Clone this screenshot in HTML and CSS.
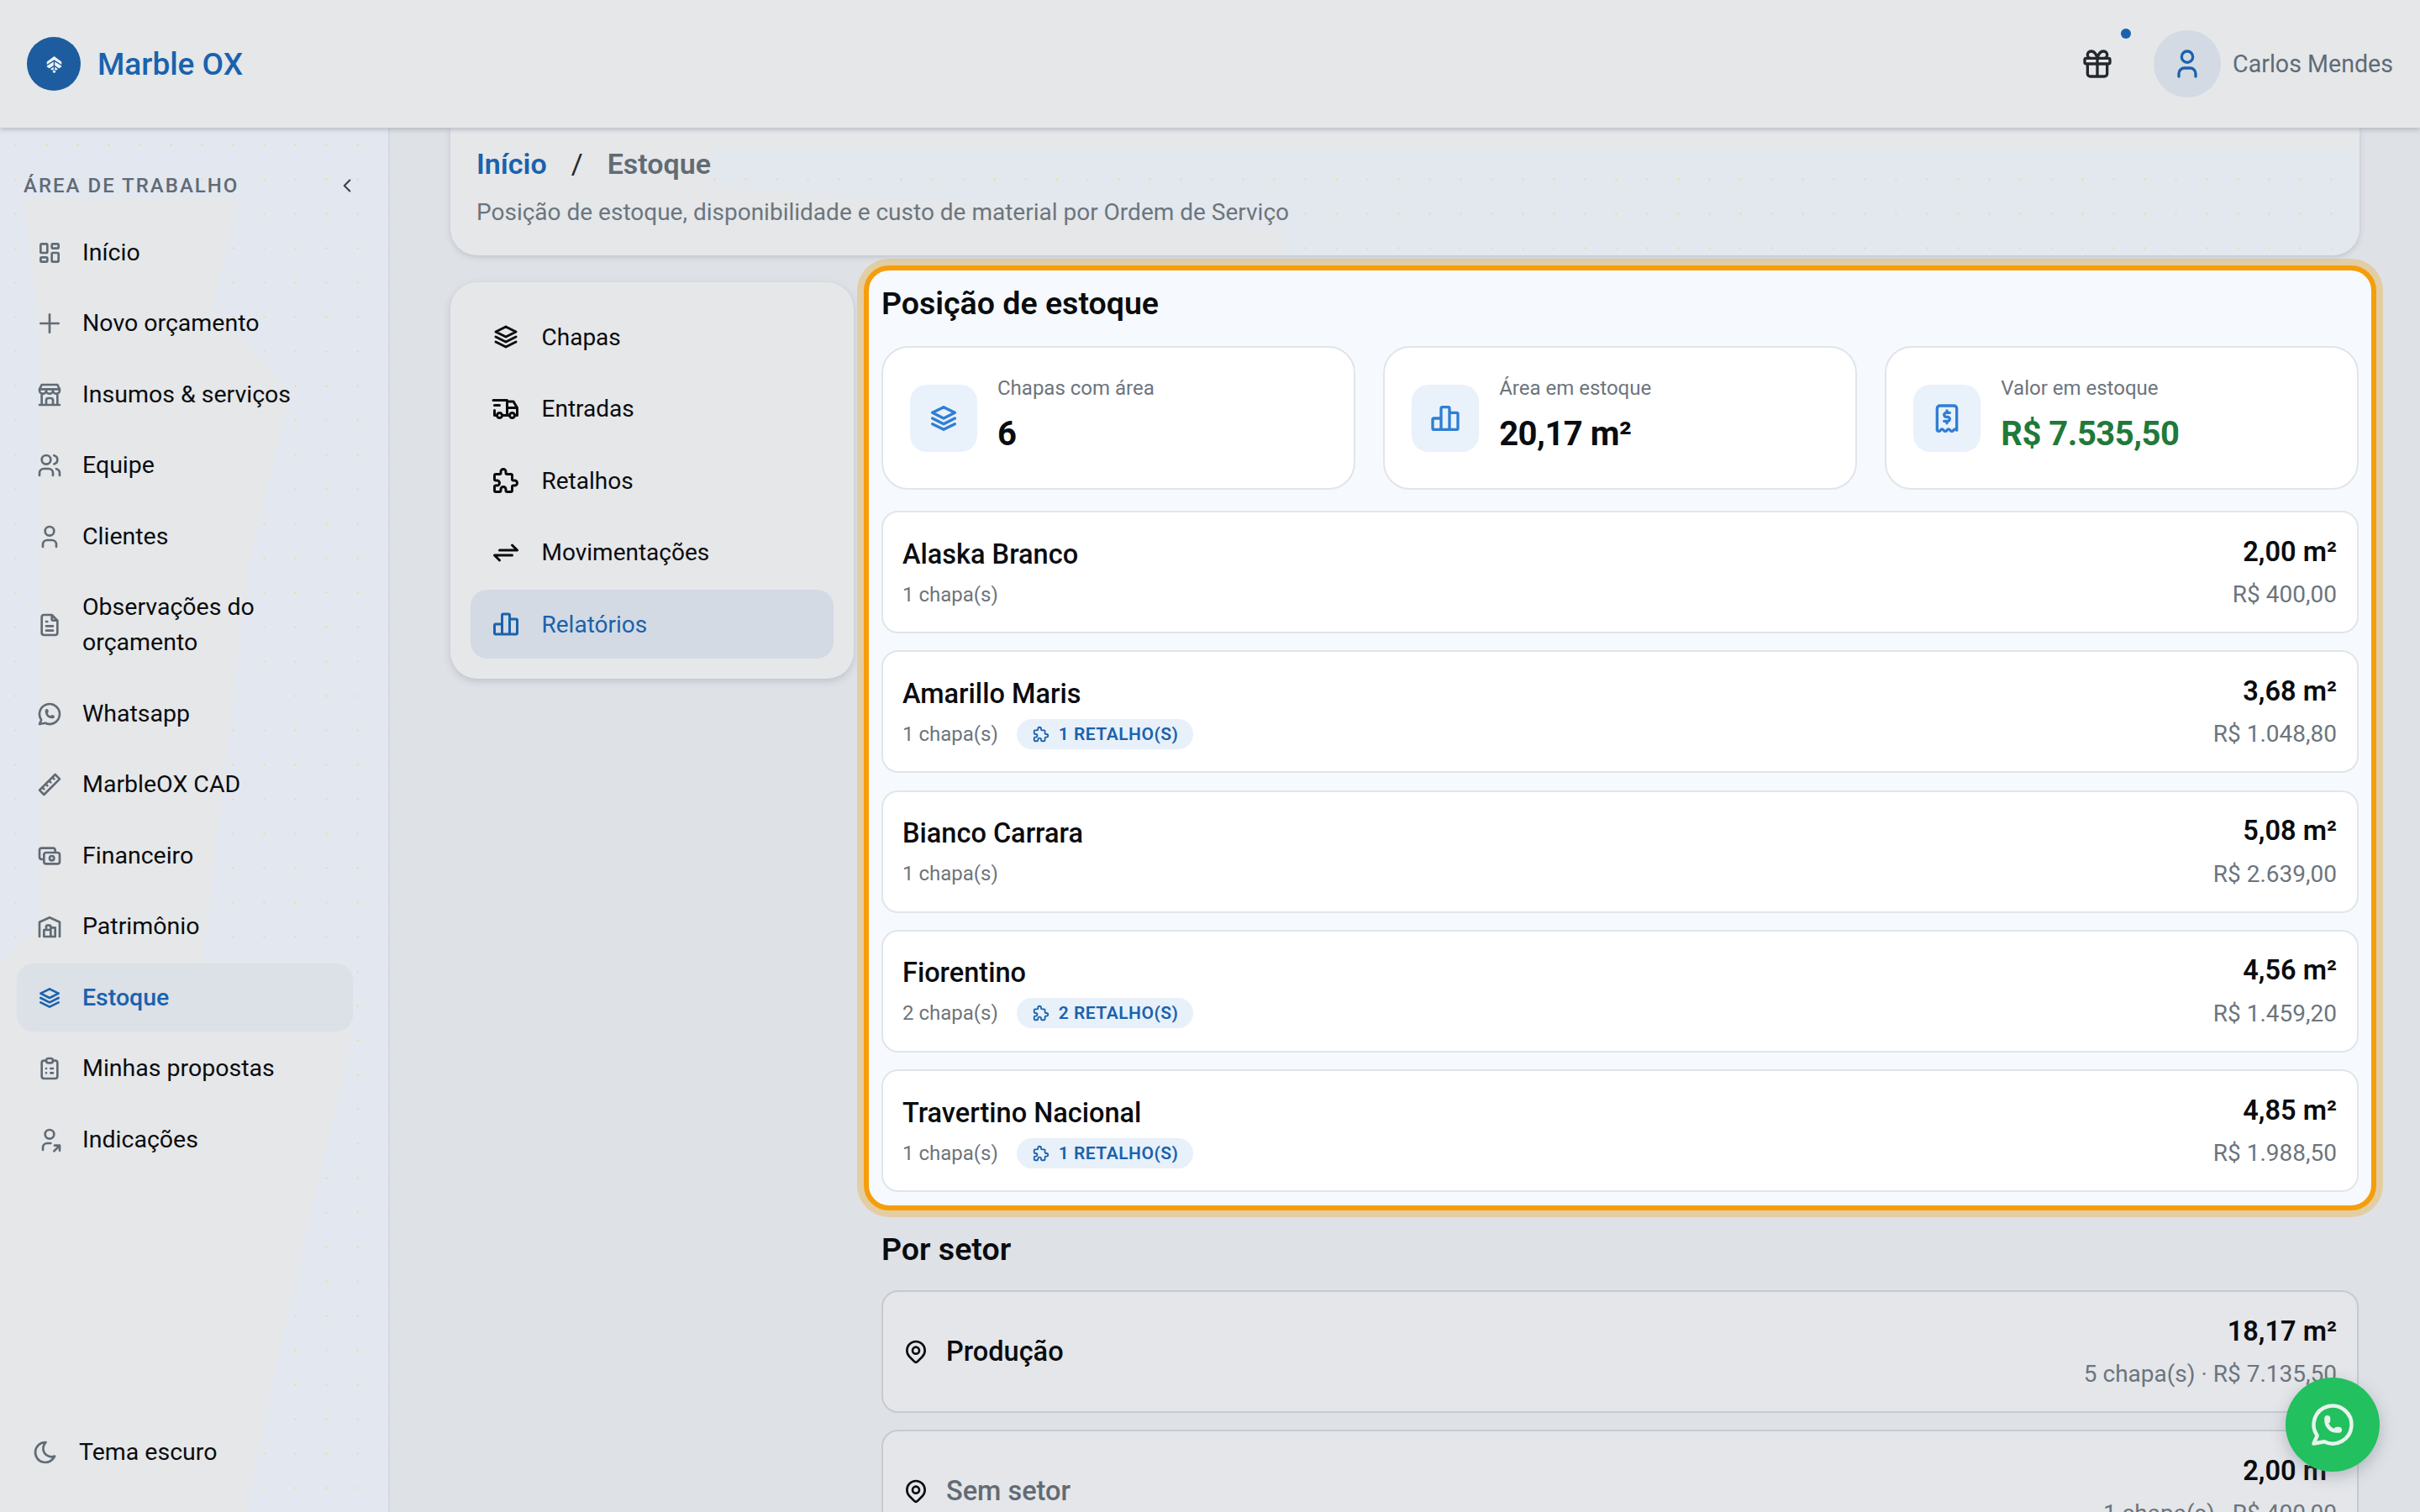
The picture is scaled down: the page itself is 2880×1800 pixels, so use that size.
FILE: index.html
```html
<!DOCTYPE html>
<html lang="pt-BR">
<head>
    <meta charset="UTF-8">
    <meta name="viewport" content="width=device-width, initial-scale=1.0">
    <title>Marble OX - Estoque</title>
    <link rel="stylesheet" href="styles.css">
</head>
<body>

    <!-- Icon sprite -->
    <svg class="sprite" xmlns="http://www.w3.org/2000/svg">
        <symbol id="i-dashboard" viewBox="0 0 24 24"><path d="M5 4h4a1 1 0 0 1 1 1v6a1 1 0 0 1 -1 1h-4a1 1 0 0 1 -1 -1v-6a1 1 0 0 1 1 -1M5 16h4a1 1 0 0 1 1 1v2a1 1 0 0 1 -1 1h-4a1 1 0 0 1 -1 -1v-2a1 1 0 0 1 1 -1M15 12h4a1 1 0 0 1 1 1v6a1 1 0 0 1 -1 1h-4a1 1 0 0 1 -1 -1v-6a1 1 0 0 1 1 -1M15 4h4a1 1 0 0 1 1 1v2a1 1 0 0 1 -1 1h-4a1 1 0 0 1 -1 -1v-2a1 1 0 0 1 1 -1"/></symbol>
        <symbol id="i-plus" viewBox="0 0 24 24"><path d="M12 4v16M4 12h16"/></symbol>
        <symbol id="i-store" viewBox="0 0 24 24"><path d="M3 21h18M3 7v1a3 3 0 0 0 6 0v-1m0 1a3 3 0 0 0 6 0v-1m0 1a3 3 0 0 0 6 0v-1h-18l2 -4h14l2 4M5 21v-10.15M19 21v-10.15M9 21v-4a2 2 0 0 1 2 -2h2a2 2 0 0 1 2 2v4"/></symbol>
        <symbol id="i-users" viewBox="0 0 24 24"><path d="M5 7a4 4 0 1 0 8 0a4 4 0 1 0 -8 0M3 21v-2a4 4 0 0 1 4 -4h4a4 4 0 0 1 4 4v2M16 3.13a4 4 0 0 1 0 7.75M21 21v-2a4 4 0 0 0 -3 -3.85"/></symbol>
        <symbol id="i-user" viewBox="0 0 24 24"><path d="M8 7a4 4 0 1 0 8 0a4 4 0 0 0 -8 0M6 21v-2a4 4 0 0 1 4 -4h4a4 4 0 0 1 4 4v2"/></symbol>
        <symbol id="i-file" viewBox="0 0 24 24"><path d="M14 3v4a1 1 0 0 0 1 1h4M17 21h-10a2 2 0 0 1 -2 -2v-14a2 2 0 0 1 2 -2h7l5 5v11a2 2 0 0 1 -2 2zM9 9h1M9 13h6M9 17h6"/></symbol>
        <symbol id="i-whatsapp" viewBox="0 0 24 24"><path d="M3 21l1.65 -3.8a9 9 0 1 1 3.4 2.9l-5.05 .9M9 10a.5 .5 0 0 0 1 0v-1a.5 .5 0 0 0 -1 0v1a5 5 0 0 0 5 5h1a.5 .5 0 0 0 0 -1h-1a.5 .5 0 0 0 0 1"/></symbol>
        <symbol id="i-ruler" viewBox="0 0 24 24"><path d="M17 3l4 4l-14 14l-4 -4zM16 7l-1.5 -1.5M13 10l-1.5 -1.5M10 13l-1.5 -1.5M7 16l-1.5 -1.5"/></symbol>
        <symbol id="i-cash" viewBox="0 0 24 24"><path d="M7 11a2 2 0 0 1 2 -2h10a2 2 0 0 1 2 2v6a2 2 0 0 1 -2 2h-10a2 2 0 0 1 -2 -2zM12 14a2 2 0 1 0 4 0a2 2 0 1 0 -4 0M17 9v-2a2 2 0 0 0 -2 -2h-10a2 2 0 0 0 -2 2v6a2 2 0 0 0 2 2h2"/></symbol>
        <symbol id="i-warehouse" viewBox="0 0 24 24"><path d="M3 21v-13l9 -4l9 4v13M13 13h4v8h-10v-6h6M13 21v-9a1 1 0 0 0 -1 -1h-2a1 1 0 0 0 -1 1v3"/></symbol>
        <symbol id="i-stack" viewBox="0 0 24 24"><path d="M12 4l-8 4l8 4l8 -4l-8 -4M4 12l8 4l8 -4M4 16l8 4l8 -4"/></symbol>
        <symbol id="i-clipboard" viewBox="0 0 24 24"><path d="M9 5h-2a2 2 0 0 0 -2 2v12a2 2 0 0 0 2 2h10a2 2 0 0 0 2 -2v-12a2 2 0 0 0 -2 -2h-2M9 5a2 2 0 0 1 2 -2h2a2 2 0 0 1 2 2v0a2 2 0 0 1 -2 2h-2a2 2 0 0 1 -2 -2zM9 12h.01M13 12h2M9 16h.01M13 16h2"/></symbol>
        <symbol id="i-user-share" viewBox="0 0 24 24"><path d="M8 7a4 4 0 1 0 8 0a4 4 0 0 0 -8 0M6 21v-2a4 4 0 0 1 4 -4h3M16 22l5 -5M21 21.5v-4.5h-4.5"/></symbol>
        <symbol id="i-moon" viewBox="0 0 24 24"><path d="M12 3c.132 0 .263 0 .393 0a7.5 7.5 0 0 0 7.92 12.446a9 9 0 1 1 -8.313 -12.454z"/></symbol>
        <symbol id="i-gift" viewBox="0 0 24 24"><path d="M3 9a1 1 0 0 1 1 -1h16a1 1 0 0 1 1 1v2a1 1 0 0 1 -1 1h-16a1 1 0 0 1 -1 -1zM12 8v13M19 12v7a2 2 0 0 1 -2 2h-10a2 2 0 0 1 -2 -2v-7M7.5 8a2.5 2.5 0 0 1 0 -5a4.8 8 0 0 1 4.5 5a4.8 8 0 0 1 4.5 -5a2.5 2.5 0 0 1 0 5"/></symbol>
        <symbol id="i-truck" viewBox="0 0 24 24"><path d="M5 17a2 2 0 1 0 4 0a2 2 0 1 0 -4 0M15 17a2 2 0 1 0 4 0a2 2 0 1 0 -4 0M5 17h-2v-4M2 5h11v12M9 17h6M19 17h2v-6h-8M13 6h5l3 5M3 9h4"/></symbol>
        <symbol id="i-puzzle" viewBox="0 0 24 24"><path d="M4 7h3a1 1 0 0 0 1 -1v-1a2 2 0 0 1 4 0v1a1 1 0 0 0 1 1h3a1 1 0 0 1 1 1v3a1 1 0 0 0 1 1h1a2 2 0 0 1 0 4h-1a1 1 0 0 0 -1 1v3a1 1 0 0 1 -1 1h-3a1 1 0 0 1 -1 -1v-1a2 2 0 0 0 -4 0v1a1 1 0 0 1 -1 1h-3a1 1 0 0 1 -1 -1v-3a1 1 0 0 1 1 -1h1a2 2 0 0 0 0 -4h-1a1 1 0 0 1 -1 -1v-3a1 1 0 0 1 1 -1"/></symbol>
        <symbol id="i-exchange" viewBox="0 0 24 24"><path d="M7 10h14l-4 -4M17 14h-14l4 4"/></symbol>
        <symbol id="i-chart" viewBox="0 0 24 24"><path d="M3 13a1 1 0 0 1 1 -1h4a1 1 0 0 1 1 1v6a1 1 0 0 1 -1 1h-4a1 1 0 0 1 -1 -1zM15 9a1 1 0 0 1 1 -1h4a1 1 0 0 1 1 1v10a1 1 0 0 1 -1 1h-4a1 1 0 0 1 -1 -1zM9 5a1 1 0 0 1 1 -1h4a1 1 0 0 1 1 1v14a1 1 0 0 1 -1 1h-4a1 1 0 0 1 -1 -1zM4 20h16"/></symbol>
        <symbol id="i-receipt" viewBox="0 0 24 24"><path d="M5 20.5v-15.5a2 2 0 0 1 2 -2h10a2 2 0 0 1 2 2v15.500q-1.170 -1.500 -2.330 0q-1.170 1.500 -2.330 0q-1.170 -1.500 -2.340 0q-1.170 1.500 -2.340 0q-1.160 -1.500 -2.330 0q-1.160 1.500 -2.330 0M14 8h-2.500a1.500 1.500 0 0 0 0 3h1a1.500 1.500 0 0 1 0 3h-2.500m2 0v1.500m0 -9v1.500"/></symbol>
        <symbol id="i-pin" viewBox="0 0 24 24"><path d="M9 11a3 3 0 1 0 6 0a3 3 0 0 0 -6 0M17.657 16.657l-4.243 4.243a2 2 0 0 1 -2.827 0l-4.244 -4.243a8 8 0 1 1 11.314 0z"/></symbol>
        <symbol id="i-chevron" viewBox="0 0 24 24"><path d="M15 6l-6 6l6 6"/></symbol>
    </svg>

    <header class="topbar">
        <div class="brand">
            <span class="brand-logo">
                <svg viewBox="0 0 24 24">
                    <path class="logo-fill" d="M12 1l10 7.500v7l-7 4.500h-6l-7 -4.500v-7z"/>
                    <path class="logo-cut" d="M12 8v13M1 14l11 -7l11 7M5 19l7 -5l7 5"/>
                    <circle class="logo-fill" cx="12" cy="22" r="1.800"/>
                </svg>
            </span>
            <span class="brand-name">Marble OX</span>
        </div>
        <div class="topbar-right">
            <span class="gift">
                <svg class="icon"><use href="#i-gift"/></svg>
                <span class="gift-dot"></span>
            </span>
            <span class="avatar"><svg class="icon"><use href="#i-user"/></svg></span>
            <span class="user-name">Carlos Mendes</span>
        </div>
    </header>

    <div class="layout">

        <!-- Sidebar -->
        <aside class="sidebar">
            <div class="sidebar-head">
                <span>ÁREA DE TRABALHO</span>
                <svg class="icon"><use href="#i-chevron"/></svg>
            </div>
            <nav class="side-nav">
                <a class="side-item" href="#"><svg class="icon"><use href="#i-dashboard"/></svg><span>Início</span></a>
                <a class="side-item" href="#"><svg class="icon"><use href="#i-plus"/></svg><span>Novo orçamento</span></a>
                <a class="side-item" href="#"><svg class="icon"><use href="#i-store"/></svg><span>Insumos &amp; serviços</span></a>
                <a class="side-item" href="#"><svg class="icon"><use href="#i-users"/></svg><span>Equipe</span></a>
                <a class="side-item" href="#"><svg class="icon"><use href="#i-user"/></svg><span>Clientes</span></a>
                <a class="side-item" href="#"><svg class="icon"><use href="#i-file"/></svg><span>Observações do<br>orçamento</span></a>
                <a class="side-item" href="#"><svg class="icon"><use href="#i-whatsapp"/></svg><span>Whatsapp</span></a>
                <a class="side-item" href="#"><svg class="icon"><use href="#i-ruler"/></svg><span>MarbleOX CAD</span></a>
                <a class="side-item" href="#"><svg class="icon"><use href="#i-cash"/></svg><span>Financeiro</span></a>
                <a class="side-item" href="#"><svg class="icon"><use href="#i-warehouse"/></svg><span>Patrimônio</span></a>
                <a class="side-item active" href="#"><svg class="icon"><use href="#i-stack"/></svg><span>Estoque</span></a>
                <a class="side-item" href="#"><svg class="icon"><use href="#i-clipboard"/></svg><span>Minhas propostas</span></a>
                <a class="side-item" href="#"><svg class="icon"><use href="#i-user-share"/></svg><span>Indicações</span></a>
            </nav>
            <div class="theme-toggle"><svg class="icon"><use href="#i-moon"/></svg><span>Tema escuro</span></div>
        </aside>

        <main class="main">
            <div class="crumbs">
                <div class="crumb-line">
                    <a href="#">Início</a>
                    <span class="crumb-sep">/</span>
                    <span class="crumb-now">Estoque</span>
                </div>
                <p class="crumb-desc">Posição de estoque, disponibilidade e custo de material por Ordem de Serviço</p>
            </div>

            <div class="content">
                <!-- Sub navigation -->
                <nav class="sub-nav">
                    <a class="sub-item" href="#"><svg class="icon"><use href="#i-stack"/></svg>Chapas</a>
                    <a class="sub-item" href="#"><svg class="icon"><use href="#i-truck"/></svg>Entradas</a>
                    <a class="sub-item" href="#"><svg class="icon"><use href="#i-puzzle"/></svg>Retalhos</a>
                    <a class="sub-item" href="#"><svg class="icon"><use href="#i-exchange"/></svg>Movimentações</a>
                    <a class="sub-item active" href="#"><svg class="icon"><use href="#i-chart"/></svg>Relatórios</a>
                </nav>

                <div class="reports">
                    <section class="panel">
                        <h2>Posição de estoque</h2>
                        <div class="stats">
                            <div class="stat">
                                <span class="stat-icon"><svg class="icon"><use href="#i-stack"/></svg></span>
                                <div class="stat-text">
                                    <div class="stat-label">Chapas com área</div>
                                    <div class="stat-value">6</div>
                                </div>
                            </div>
                            <div class="stat">
                                <span class="stat-icon"><svg class="icon"><use href="#i-chart"/></svg></span>
                                <div class="stat-text">
                                    <div class="stat-label">Área em estoque</div>
                                    <div class="stat-value">20,17 m²</div>
                                </div>
                            </div>
                            <div class="stat">
                                <span class="stat-icon"><svg class="icon"><use href="#i-receipt"/></svg></span>
                                <div class="stat-text">
                                    <div class="stat-label">Valor em estoque</div>
                                    <div class="stat-value money">R$ 7.535,50</div>
                                </div>
                            </div>
                        </div>

                        <div class="rows">
                            <div class="row">
                                <div class="row-left">
                                    <div class="row-name">Alaska Branco</div>
                                    <div class="row-sub">1 chapa(s)</div>
                                </div>
                                <div class="row-right">
                                    <div class="row-area">2,00 m²</div>
                                    <div class="row-sub">R$ 400,00</div>
                                </div>
                            </div>
                            <div class="row">
                                <div class="row-left">
                                    <div class="row-name">Amarillo Maris</div>
                                    <div class="row-sub">1 chapa(s) <span class="chip"><svg class="icon"><use href="#i-puzzle"/></svg>1 RETALHO(S)</span></div>
                                </div>
                                <div class="row-right">
                                    <div class="row-area">3,68 m²</div>
                                    <div class="row-sub">R$ 1.048,80</div>
                                </div>
                            </div>
                            <div class="row">
                                <div class="row-left">
                                    <div class="row-name">Bianco Carrara</div>
                                    <div class="row-sub">1 chapa(s)</div>
                                </div>
                                <div class="row-right">
                                    <div class="row-area">5,08 m²</div>
                                    <div class="row-sub">R$ 2.639,00</div>
                                </div>
                            </div>
                            <div class="row">
                                <div class="row-left">
                                    <div class="row-name">Fiorentino</div>
                                    <div class="row-sub">2 chapa(s) <span class="chip"><svg class="icon"><use href="#i-puzzle"/></svg>2 RETALHO(S)</span></div>
                                </div>
                                <div class="row-right">
                                    <div class="row-area">4,56 m²</div>
                                    <div class="row-sub">R$ 1.459,20</div>
                                </div>
                            </div>
                            <div class="row">
                                <div class="row-left">
                                    <div class="row-name">Travertino Nacional</div>
                                    <div class="row-sub">1 chapa(s) <span class="chip"><svg class="icon"><use href="#i-puzzle"/></svg>1 RETALHO(S)</span></div>
                                </div>
                                <div class="row-right">
                                    <div class="row-area">4,85 m²</div>
                                    <div class="row-sub">R$ 1.988,50</div>
                                </div>
                            </div>
                        </div>
                    </section>

                    <section class="sectors">
                        <h2>Por setor</h2>
                        <div class="rows">
                            <div class="row sector">
                                <div class="sector-name"><svg class="icon"><use href="#i-pin"/></svg>Produção</div>
                                <div class="row-right">
                                    <div class="row-area">18,17 m²</div>
                                    <div class="row-sub">5 chapa(s) · R$ 7.135,50</div>
                                </div>
                            </div>
                            <div class="row sector">
                                <div class="sector-name muted"><svg class="icon"><use href="#i-pin"/></svg>Sem setor</div>
                                <div class="row-right">
                                    <div class="row-area">2,00 m²</div>
                                    <div class="row-sub">1 chapa(s) · R$ 400,00</div>
                                </div>
                            </div>
                        </div>
                    </section>
                </div>
            </div>
        </main>
    </div>

    <a class="whatsapp-fab" href="#"><svg class="icon"><use href="#i-whatsapp"/></svg></a>

</body>
</html>
```

FILE: styles.css
```css
html, body {
    margin: 0;
    padding: 0;
    height: 100%;
    overflow: hidden;
    font-family: "Roboto", "Inter", sans-serif;
    color: #0a0c0f;
    background-color: #dee1e6;
}
a {
    color: inherit;
    text-decoration: none;
}
h2 {
    margin: 0;
    font-size: 37.5px;
    line-height: 48px;
    font-weight: 600;
}
.sprite {
    display: none;
}
.icon {
    width: 32px;
    height: 32px;
    flex: none;
    fill: none;
    stroke: currentColor;
    stroke-width: 2;
    stroke-linecap: round;
    stroke-linejoin: round;
}

/* Top bar */
.topbar {
    position: relative;
    z-index: 3;
    height: 152px;
    box-sizing: border-box;
    padding: 0 32px;
    display: flex;
    align-items: center;
    justify-content: space-between;
    background-color: #e5e7e9;
    box-shadow: 0 2px 6px rgba(90, 100, 115, 0.35);
}
.brand {
    display: flex;
    align-items: center;
    gap: 20px;
}
.brand-logo {
    width: 64px;
    height: 64px;
    border-radius: 50%;
    background-color: #1c5c9f;
    display: flex;
    align-items: center;
    justify-content: center;
}
.brand-logo svg {
    width: 21px;
    height: 21px;
}
.logo-fill {
    fill: #eef1f4;
}
.logo-cut {
    fill: none;
    stroke: #1c5c9f;
    stroke-width: 1.600;
}
.brand-name {
    font-size: 37px;
    font-weight: 500;
    color: #1a62ad;
}
.topbar-right {
    display: flex;
    align-items: center;
}
.gift {
    position: relative;
    display: flex;
    color: #24282d;
    margin-right: 47px;
}
.gift .icon {
    width: 40px;
    height: 40px;
}
.gift-dot {
    position: absolute;
    top: -22px;
    right: -20px;
    width: 12px;
    height: 12px;
    border-radius: 50%;
    background-color: #1a62ad;
}
.avatar {
    width: 80px;
    height: 80px;
    border-radius: 50%;
    background-color: #d3dae3;
    color: #1a62ad;
    display: flex;
    align-items: center;
    justify-content: center;
}
.avatar .icon {
    width: 40px;
    height: 40px;
}
.user-name {
    margin-left: 14px;
    font-size: 28.6px;
    color: #616b75;
}

.layout {
    display: flex;
    height: 1648px;
}

/* Sidebar */
.sidebar {
    position: relative;
    width: 464px;
    box-sizing: border-box;
    flex: none;
    display: flex;
    flex-direction: column;
    border-right: 2px solid #d3d9e1;
    background-color: #e3e8f0;
    background-image: radial-gradient(#efdcb5 1px, transparent 1.5px);
    background-size: 37px 41px;
}
/* lighter wedge behind the menu */
.sidebar::before {
    content: "";
    position: absolute;
    inset: 0;
    background-color: #e5e7e9;
    clip-path: polygon(28px 83px, 283px 83px, 253px 214px, 345px 314px, 320px 418px, 295px 528px, 270px 748px, 242px 991px, 420px 1077px, 333px 1454px, 293px 1648px, 0 1648px, 0 998px, 47px 948px, 47px 248px);
}
.sidebar > * {
    position: relative;
}
.sidebar-head {
    margin-top: 53px;
    padding: 0 28px;
    height: 32px;
    display: flex;
    align-items: center;
    justify-content: space-between;
    font-size: 24px;
    font-weight: 500;
    letter-spacing: 2px;
    color: #616b75;
}
.sidebar-head .icon {
    width: 26px;
    height: 26px;
    margin-right: 8px;
    color: #3c434b;
}
.side-nav {
    margin-top: 23px;
    padding: 0 20px;
    width: 400px;
    display: flex;
    flex-direction: column;
    gap: 3.5px;
}
.side-item {
    display: flex;
    align-items: center;
    gap: 23px;
    padding: 19.5px 0 19.5px 23px;
    font-size: 28.5px;
    line-height: 42px;
    border-radius: 20px;
}
.side-item .icon {
    color: #616b75;
}
.side-item.active {
    background-color: #dce0e7;
    color: #1a62ad;
    font-weight: 500;
}
.side-item.active .icon {
    color: #1a62ad;
}
.theme-toggle {
    margin-top: auto;
    margin-bottom: 50px;
    padding-left: 38px;
    display: flex;
    align-items: center;
    gap: 24px;
    font-size: 28.5px;
    line-height: 42px;
}
.theme-toggle .icon {
    color: #616b75;
}

/* Main column */
.main {
    flex: 1;
    min-width: 0;
    padding: 0 72px;
}
.crumbs {
    position: relative;
    box-sizing: border-box;
    height: 152px;
    padding: 21px 31px 0;
    border-radius: 0 0 32px 32px;
    background-color: #e5e7e9;
    box-shadow: 0 2px 6px rgba(120, 130, 145, 0.3);
}
/* bluish tint on the right part of the breadcrumb card */
.crumbs::before {
    content: "";
    position: absolute;
    inset: 0;
    border-radius: 0 0 32px 32px;
    background-color: #e3e8ef;
    background-image: radial-gradient(#efdcb5 1px, transparent 1.5px);
    background-size: 37px 41px;
    clip-path: polygon(310px 24px, 2272px 24px, 2272px 152px, 991px 152px, 991px 120px, 310px 70px);
}
.crumbs > * {
    position: relative;
}
.crumb-line {
    display: flex;
    gap: 29px;
    font-size: 34px;
    line-height: 44px;
    font-weight: 600;
}
.crumb-line a {
    color: #1a62ad;
}
.crumb-sep {
    font-weight: 400;
    color: #24282d;
}
.crumb-now {
    color: #616b75;
}
.crumb-desc {
    margin: 16px 0 0;
    font-size: 28px;
    line-height: 40px;
    color: #6c757d;
}

.content {
    margin-top: 32px;
    display: grid;
    grid-template-columns: 480px 1fr;
    column-gap: 12px;
    align-items: start;
}

/* Sub navigation */
.sub-nav {
    padding: 24px;
    display: flex;
    flex-direction: column;
    gap: 3.500px;
    border-radius: 32px;
    background-color: #e5e7e9;
    box-shadow: 0 3px 8px rgba(120, 130, 145, 0.3);
}
.sub-item {
    height: 82px;
    padding-left: 24px;
    display: flex;
    align-items: center;
    gap: 24.5px;
    font-size: 28px;
    border-radius: 20px;
}
.sub-item .icon {
    width: 36px;
    height: 36px;
}
.sub-item.active {
    background-color: #d3dae3;
    color: #1a62ad;
}

/* Report column */
.reports {
    margin: -20px -20px 0 0;
}
.panel {
    padding: 15px 15px 16px;
    border: 6px solid #f59e0b;
    border-radius: 30px;
    background-color: #f6f9fd;
    box-shadow: 0 0 0 8px #e3cda3;
}
.stats {
    margin-top: 27px;
    display: grid;
    grid-template-columns: repeat(3, 1fr);
    gap: 33.5px;
}
.stat {
    height: 171px;
    box-sizing: border-box;
    padding-left: 32px;
    display: flex;
    align-items: center;
    gap: 24px;
    background-color: #fff;
    border: 2px solid #e1e5ea;
    border-radius: 32px;
}
.stat-icon {
    width: 80px;
    height: 80px;
    border-radius: 20px;
    background-color: #e9f1fb;
    color: #2f7ed3;
    display: flex;
    align-items: center;
    justify-content: center;
}
.stat-icon .icon {
    width: 40px;
    height: 40px;
}
.stat-text {
    margin-top: -6px;
}
.stat-label {
    font-size: 24px;
    line-height: 32px;
    color: #6c757d;
}
.stat-value {
    margin-top: 13px;
    font-size: 40px;
    line-height: 52px;
    font-weight: 700;
    letter-spacing: -0.5px;
}
.money {
    color: #1f7a3a;
}

/* List rows */
.rows {
    margin-top: 25px;
    display: flex;
    flex-direction: column;
    gap: 20.250px;
}
.row {
    height: 146px;
    box-sizing: border-box;
    padding: 0 24px 0 23px;
    display: flex;
    align-items: center;
    justify-content: space-between;
    background-color: #fff;
    border: 2px solid #e1e5ea;
    border-radius: 20px;
}
.row-left {
    margin-top: 3px;
}
.row-name {
    font-size: 32.5px;
    line-height: 40px;
    font-weight: 500;
}
.row-sub {
    margin-top: 10px;
    display: flex;
    align-items: center;
    gap: 22px;
    height: 36px;
    font-size: 24px;
    color: #6c757d;
}
.row-right {
    text-align: right;
}
.row-right .row-sub {
    justify-content: flex-end;
    margin-top: 13px;
    font-size: 28px;
}
.row-area {
    font-size: 32.5px;
    line-height: 40px;
    font-weight: 600;
}
.chip {
    height: 36px;
    padding: 0 18px;
    display: inline-flex;
    align-items: center;
    gap: 10px;
    border-radius: 18px;
    background-color: #e8f0fa;
    color: #1a62ad;
    font-size: 21px;
    font-weight: 600;
    letter-spacing: 0.5px;
}
.chip .icon {
    width: 22px;
    height: 22px;
}

/* Por setor */
.sectors {
    margin-top: 22px;
    padding: 0 21px;
}
.sector {
    background-color: #e4e6e9;
    border-color: #c6cbd1;
}
.sector-name {
    display: flex;
    align-items: center;
    gap: 20px;
    font-size: 32.5px;
    font-weight: 500;
}
.sector-name .icon {
    color: #0a0c0f;
}
.sector-name.muted {
    color: #616b75;
}

.whatsapp-fab {
    position: fixed;
    z-index: 5;
    right: 48px;
    bottom: 48px;
    width: 112px;
    height: 112px;
    border-radius: 50%;
    background-color: #22c05f;
    color: #e9f3ec;
    display: flex;
    align-items: center;
    justify-content: center;
    box-shadow: 0 6px 18px rgba(90, 100, 115, 0.35);
}
.whatsapp-fab .icon {
    width: 60px;
    height: 60px;
    stroke-width: 1.800;
}
```
